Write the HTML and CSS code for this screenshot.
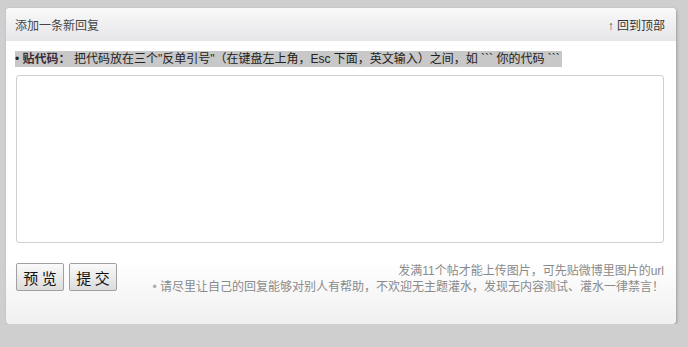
FILE: index.html
```html
<!DOCTYPE html>
<html lang="zh-CN">
<head>
    <meta charset="UTF-8">
    <title>添加一条新回复</title>
    <link rel="stylesheet" href="styles.css">
</head>
<body>
    <div class="box">
        <div class="box-head">
            <span>添加一条新回复</span>
            <a class="to-top" href="#"><span class="arrow">↑</span> 回到顶部</a>
        </div>
        <div class="box-body">
            <div class="tip"><span class="tip-text">• <b>贴代码：</b> 把代码放在三个"反单引号"（在键盘左上角，Esc 下面，英文输入）之间，如 ``` 你的代码 ```</span></div>
            <textarea class="editor"></textarea>
            <div class="actions">
                <div class="btns">
                    <button type="button">预 览</button>
                    <button type="button">提 交</button>
                </div>
                <div class="notes">
                    <p>发满11个帖才能上传图片，可先贴微博里图片的url</p>
                    <p><span class="dot">•</span> 请尽里让自己的回复能够对别人有帮助，不欢迎无主题灌水，发现无内容测试、灌水一律禁言！</p>
                </div>
            </div>
        </div>
    </div>
</body>
</html>
```

FILE: styles.css
```css
* { margin: 0; padding: 0; box-sizing: border-box; }
body {
    font-family: "Liberation Sans", "Noto Sans CJK SC", sans-serif;
    font-size: 12px;
    background: #cfcfcf;
    color: #333;
    padding: 8px 12px 0 6px;
}
.box {
    width: 670px;
    height: 316px;
    background: linear-gradient(#fff 80%, #f0f0f0);
    border-radius: 4px;
    box-shadow: 1px 1px 3px rgba(0, 0, 0, 0.25);
}
.box-head {
    height: 33px;
    display: flex;
    justify-content: space-between;
    align-items: center;
    padding: 0 11px 0 9px;
    background: linear-gradient(#f9f9fa, #e6e6e9);
    border-radius: 4px 4px 0 0;
    color: #444;
    font-size: 12px;
}
.to-top { color: #333; text-decoration: none; }
.arrow { color: #555; }
.box-body { padding: 10px 12px 0 9px; }
.tip { line-height: 16px; height: 16px; }
.tip-text {
    display: inline-block;
    background: #c8c8c8;
    padding-right: 2px;
    color: #222;
    white-space: nowrap;
}
.tip-text b { color: #3a2d3a; }
.editor {
    display: block;
    width: 648px;
    height: 168px;
    margin: 8px 0 0 1px;
    border: 1px solid #cfcfcf;
    border-radius: 3px;
    resize: none;
}
.actions {
    display: flex;
    justify-content: space-between;
    margin-top: 20px;
    padding-left: 1px;
}
.btns { display: flex; gap: 5px; }
button {
    width: 48px;
    height: 28px;
    font-family: "Noto Sans CJK SC", sans-serif;
    font-size: 15px;
    color: #111;
    background: linear-gradient(#fafafa, #dcdcdc);
    border: 1px solid #a0a0a0;
    border-radius: 2px;
}
.notes {
    text-align: right;
    color: #8a8a8a;
    line-height: 16px;
}
.dot { color: #aaa; }
```
